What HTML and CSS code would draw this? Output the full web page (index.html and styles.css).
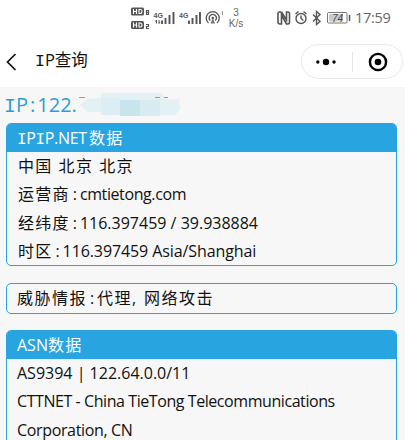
FILE: index.html
```html
<!DOCTYPE html>
<html lang="zh-CN">
<head>
<meta charset="utf-8">
<title>IP查询</title>
<link rel="stylesheet" href="styles.css">
</head>
<body>
<header class="status">
  <svg class="status-icons" width="100" height="36" viewBox="0 0 100 36" fill="none" stroke="#555">
    <g fill="#555" stroke="none"><rect y="7.500" width="13" height="8" rx="1.500"/><rect y="21" width="13" height="8" rx="1.500"/></g>
    <g stroke="#fff" stroke-width="1.100"><path d="M2.500 9v5M5.500 9v5M2.500 11.500h3M8 9.500h1.500q1.500 0 1.500 2t-1.500 2H8zM2.500 22.500v5M5.500 22.500v5M2.500 25h3M8 23h1.500q1.500 0 1.500 2t-1.500 2H8z"/></g>
    <path d="M15.500 10.500h2v4h-2zM15.500 12.500h2M15 24.500h2.500v2h-2v2H18" stroke-width="1.200"/>
    <g class="tiny" fill="#555" stroke="none"><text x="22.500" y="17.500">4G</text><text x="48" y="17.500">4G</text></g>
    <path d="M25.500 20v3.500m-1-2 1-1.500M28 20v3.500m1-1.500-1 1.500" stroke-width="1"/>
    <path d="M31 20.500v3.500M34.500 18v6M38.500 15v9M42.500 12v12M58 20.500v3.500M61.500 18v6M65.500 15v9M69 12v12" stroke-width="1.900"/>
    <path d="M77.500 23a6.500 6.500 0 1 1 8.500 0M79.300 20.500a3.500 3.500 0 1 1 5 0" stroke-width="1.300"/>
    <circle cx="81.800" cy="18" r="1.300" fill="#555" stroke="none"/><path d="m81.800 18-2.300 5.500h4.600z" fill="#777" stroke="none"/>
    <path d="m90.500 12 1-.7v4" stroke="#888" stroke-width=".8"/>
  </svg>
  <div class="speed"><span>3</span><span>K/s</span></div>
  <svg class="status-right" width="76" height="36" viewBox="0 0 76 36" fill="none" stroke="#555" stroke-width="1.400">
    <path d="M4.500 12H2.500Q1 12 1 13.500v8.500Q1 24 3 24h1.500V15l5 9H11q1.500 0 1.500-1.500V14Q12.500 12 11 12H9.500v8L4.500 12" stroke-width="1.600"/>
    <circle cx="24" cy="18.500" r="5"/><path d="M24 15.500v3l2.500 2M18.500 14l3-2.500M29.500 14l-3-2.500"/>
    <path d="m36 14.500 7 7-3.500 3v-13l3.500 3-7 7"/>
    <rect x="50.500" y="12.500" width="19.500" height="10.500" rx="1" stroke="#777" stroke-width="1"/><path d="M52 14h14v7.500H52z" fill="#ccc" stroke="none"/><path d="M72.500 15v6" stroke-width="1.500"/>
    <text class="battery" x="55" y="22" fill="#444" stroke="none">74</text>
  </svg>
  <span class="clock">17:59</span>
</header>
<nav class="nav">
  <svg class="back" width="11" height="18" viewBox="0 0 11 18"><path d="m9.500 1-8 8 8 8" fill="none" stroke="#111" stroke-width="1.700"/></svg>
  <h1 class="title"><span class="mono">I</span>P查询</h1>
  <div class="capsule">
    <svg width="20" height="8" viewBox="0 0 20 8"><circle cx="1.800" cy="4" r="1.700"/><circle cx="10" cy="4" r="3.200"/><circle cx="18" cy="4" r="1.700"/></svg>
    <i class="divider"></i>
    <svg width="20" height="20" viewBox="0 0 20 20"><circle cx="10" cy="10" r="8.100" fill="none" stroke="#000" stroke-width="2.400"/><circle cx="10" cy="10" r="3.300"/></svg>
  </div>
</nav>
<main>
  <div class="ip"><span class="ip-text"><span class="mono">I</span>P<span class="colon">:</span>122.</span>
    <svg class="mosaic" width="104" height="26" viewBox="0 0 104 26"><path d="M1 13 8 7 22 6V1h60l5 6h13l1 10-5 6H23v-3H9z" fill="#e3f0f4"/><path d="M22 6h19v17H22z" fill="#dceef4"/><path d="M41 8h20v16H41z" fill="#c8e4ed"/><path d="M61 8h20v16H61z" fill="#d8ebf1"/><path d="M0 5.500h6M76 5.500h5M85 5.500h4" stroke="#4fb3dc" stroke-width="1.200"/></svg>
  </div>
  <section class="card">
    <h2><span class="l-ipip"><span class="mono">I</span>P<span class="mono">I</span>P.NET</span><span class="zh">数据</span></h2>
    <p class="region"><span class="zh">中国</span><span class="zh">北京</span><span class="zh">北京</span></p>
    <p><span class="zh">运营商</span><b>:</b><span class="l-host">cmtietong.com</span></p>
    <p><span class="zh">经纬度</span><b>:</b><span class="l-geo">116.397459 / 39.938884</span></p>
    <p><span class="zh">时区</span><b>:</b><span class="l-zone">116.397459 Asia/Shanghai</span></p>
  </section>
  <section class="card threat">
    <p><span class="zh">威胁情报</span><b>:</b><span class="zh">代理</span><b class="comma">,</b><span class="zh">网络攻击</span></p>
  </section>
  <section class="card asn">
    <h2><span class="l-asn">ASN</span><span class="zh">数据</span></h2>
    <p><span class="l-as">AS9394 | 122.64.0.0/11</span></p>
    <p><span class="l-org">CTTNET - China TieTong Telecommunications</span></p>
    <p><span class="l-corp">Corporation, CN</span></p>
  </section>
</main>
</body>
</html>
```
FILE: styles.css
```css
* { box-sizing: border-box; }
body {
  margin: 0;
  width: 405px;
  height: 440px;
  overflow: hidden;
  background: #f7f7f7;
  color: #111;
  font: 400 16px/28.300px "Open Sans", "Noto Sans CJK SC", sans-serif;
}
h1, h2, p { margin: 0; font: inherit; }
svg { display: block; flex: none; }
.mono { font-family: "Liberation Mono", monospace; }
.status { height: 36px; background: #fff; display: flex; padding-left: 131px; color: #666; }
.tiny { font: bold 7px "Liberation Sans", sans-serif; }
.speed { width: 16px; margin: 7px 0 0 -3px; display: flex; flex-direction: column; align-items: center; font: 10px/11px "Liberation Sans", sans-serif; }
.status-right { margin-left: 33px; }
.battery { font: italic 10px "Liberation Sans", sans-serif; }
.clock { margin-left: 2px; font: 14.500px/36px "Open Sans", sans-serif; letter-spacing: -.3px; }
.nav { height: 51px; background: #fff; display: flex; align-items: center; padding: 0 2px 0 6px; }
.title { margin-left: 18px; font-size: 16.500px; }
.capsule { margin-left: auto; width: 102px; height: 35px; border: 1px solid #e8e8e8; border-radius: 18px; display: flex; align-items: center; justify-content: space-between; padding: 0 14px; }
.divider { width: 1px; height: 20px; background: #e5e5e5; }
.ip { height: 36px; padding: 5px 0 0 4px; display: flex; color: #28a0d5; font-size: 20px; line-height: 26px; }
.ip-text { width: 75px; }
.ip-text .colon { margin: 0 2px; }
.card { width: 391px; height: 143px; margin-left: 6px; border: 1px solid #28a5e0; border-radius: 5px; overflow: hidden; }
.card h2 { height: 28px; padding-left: 10px; background: #28a5e0; color: #fff; display: flex; line-height: 28px; }
.card p { height: 28.300px; padding-left: 11px; display: flex; white-space: pre; }
.zh { letter-spacing: 1.300px; }
.card b { width: 10px; font-weight: 400; text-align: center; }
.card .comma { width: 12px; text-align: left; }
.region { gap: 6px; }
.threat { height: 31px; margin: 17px 0 16px 6px; }
.threat p { padding-left: 10px; }
.threat .zh { letter-spacing: 1.500px; }
.asn { height: 130px; }
.asn p { padding-left: 10px; }
.l-ipip { width: 72px; letter-spacing: -.35px; }
.l-host { letter-spacing: -.4px; }
.l-zone { letter-spacing: -.1px; }
.l-org { letter-spacing: -.43px; }
.l-corp { letter-spacing: -.35px; }
```
